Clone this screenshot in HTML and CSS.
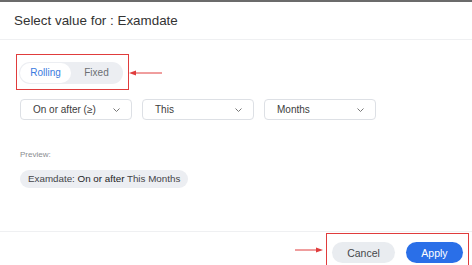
FILE: index.html
```html
<!DOCTYPE html>
<html lang="en">
<head>
    <meta charset="UTF-8">
    <meta name="viewport" content="width=device-width, initial-scale=1.0">
    <title>Select value</title>
    <link rel="stylesheet" href="styles.css">
</head>
<body>

<div class="dialog">
  <div class="dialog-head">Select value for : Examdate</div>

  <div class="dialog-body">
    <div class="mode-row">
      <div class="mark mode-mark">
        <div class="toggle">
          <span class="toggle-item active">Rolling</span>
          <span class="toggle-item">Fixed</span>
        </div>
      </div>
      <svg class="arrow arrow-left" width="34" height="8" viewBox="0 0 34 8">
        <line x1="5" y1="4" x2="33" y2="4" stroke="#e03c3c" stroke-width="1"/>
        <polygon points="0,4 7,1.5 7,6.5" fill="#e03c3c"/>
      </svg>
    </div>

    <div class="select-row">
      <div class="select">
        <span>On or after (≥)</span>
        <svg class="chev" width="7" height="4" viewBox="0 0 7 4"><polyline points="0.5,0.5 3.5,3.5 6.5,0.5" fill="none" stroke="#777" stroke-width="1"/></svg>
      </div>
      <div class="select">
        <span>This</span>
        <svg class="chev" width="7" height="4" viewBox="0 0 7 4"><polyline points="0.5,0.5 3.5,3.5 6.5,0.5" fill="none" stroke="#777" stroke-width="1"/></svg>
      </div>
      <div class="select">
        <span>Months</span>
        <svg class="chev" width="7" height="4" viewBox="0 0 7 4"><polyline points="0.5,0.5 3.5,3.5 6.5,0.5" fill="none" stroke="#777" stroke-width="1"/></svg>
      </div>
    </div>

    <p class="preview-label">Preview:</p>
    <div class="chip">Examdate: <b>On or after</b> This Months</div>
  </div>

  <div class="dialog-foot">
    <svg class="arrow arrow-right" width="28" height="8" viewBox="0 0 28 8">
      <line x1="0" y1="4" x2="22" y2="4" stroke="#e03c3c" stroke-width="1"/>
      <polygon points="28,4 21,1.5 21,6.5" fill="#e03c3c"/>
    </svg>
    <div class="mark foot-mark">
      <button class="btn btn-cancel">Cancel</button>
      <button class="btn btn-apply">Apply</button>
    </div>
  </div>
</div>

</body>
</html>
```

FILE: styles.css
```css
/*CSS RESETS*/

body {
    margin: 0;
    background-color: #ffffff;
    font-family: "Liberation Sans", Arial, sans-serif;
}

p {
    margin: 0;
}


/*CSS START*/

.dialog{
    display: flex;
    flex-direction: column;
    height: 265px;
    box-sizing: border-box;
    border-top: 2px solid #6b6b6b;
    overflow: hidden;
}

.dialog-head{
    height: 38px;
    box-sizing: border-box;
    padding: 11px 0 0 14px;
    font-size: 13.4px;
    color: #333333;
    border-bottom: 1px solid #eff0f2;
}

.dialog-body{
    flex: 1;
    padding: 14px 20px 0 16px;
}

.mode-row{
    display: flex;
    align-items: center;
}

.mark{
    border: 1px solid #e03c3c;
}

.mode-mark{
    display: flex;
    padding: 7px 5px 5px 2px;
}

.toggle{
    display: flex;
    padding: 1px;
    border-radius: 11px;
    background-color: #eceef2;
}

.toggle-item{
    width: 51px;
    height: 20px;
    line-height: 20px;
    text-align: center;
    font-size: 10px;
    color: #6b6e73;
    border-radius: 10px;
}

.toggle-item.active{
    background-color: #ffffff;
    color: #3a7be0;
}

.arrow-left{
    margin-top: 2px;
}

.select-row{
    display: flex;
    gap: 10px;
    margin-top: 9px;
    padding-left: 4px;
}

.select{
    display: flex;
    align-items: center;
    justify-content: space-between;
    width: 112px;
    height: 21px;
    box-sizing: border-box;
    padding: 0 11px 0 12px;
    border: 1px solid #dde0e5;
    border-radius: 4px;
    font-size: 10px;
    color: #3c3c3c;
}

.preview-label{
    margin-top: 30px;
    padding-left: 4px;
    font-size: 8px;
    color: #8a8c90;
}

.chip{
    display: inline-block;
    margin-top: 11px;
    margin-left: 4px;
    height: 18px;
    line-height: 18px;
    padding: 0 8px;
    border-radius: 9px;
    background-color: #eceef2;
    font-size: 9.8px;
    color: #444548;
}

.chip b{
    font-weight: normal;
    color: #1e1e1e;
}

.dialog-foot{
    display: flex;
    justify-content: flex-end;
    align-items: flex-start;
    height: 34px;
    box-sizing: border-box;
    border-top: 1px solid #eff0f2;
    padding-right: 3px;
}

.arrow-right{
    margin-top: 14px;
    margin-right: 3px;
}

.foot-mark{
    display: flex;
    gap: 11px;
    margin-top: 1px;
    height: 40px;
    padding: 8px 5px 0 5px;
}

.btn{
    height: 21px;
    border: none;
    border-radius: 11px;
    font-family: "Liberation Sans", Arial, sans-serif;
    font-size: 10.5px;
    cursor: pointer;
}

.btn-cancel{
    width: 63px;
    background-color: #e9ecf0;
    color: #45474a;
}

.btn-apply{
    width: 57px;
    background-color: #2a6fe8;
    color: #ffffff;
}
```
